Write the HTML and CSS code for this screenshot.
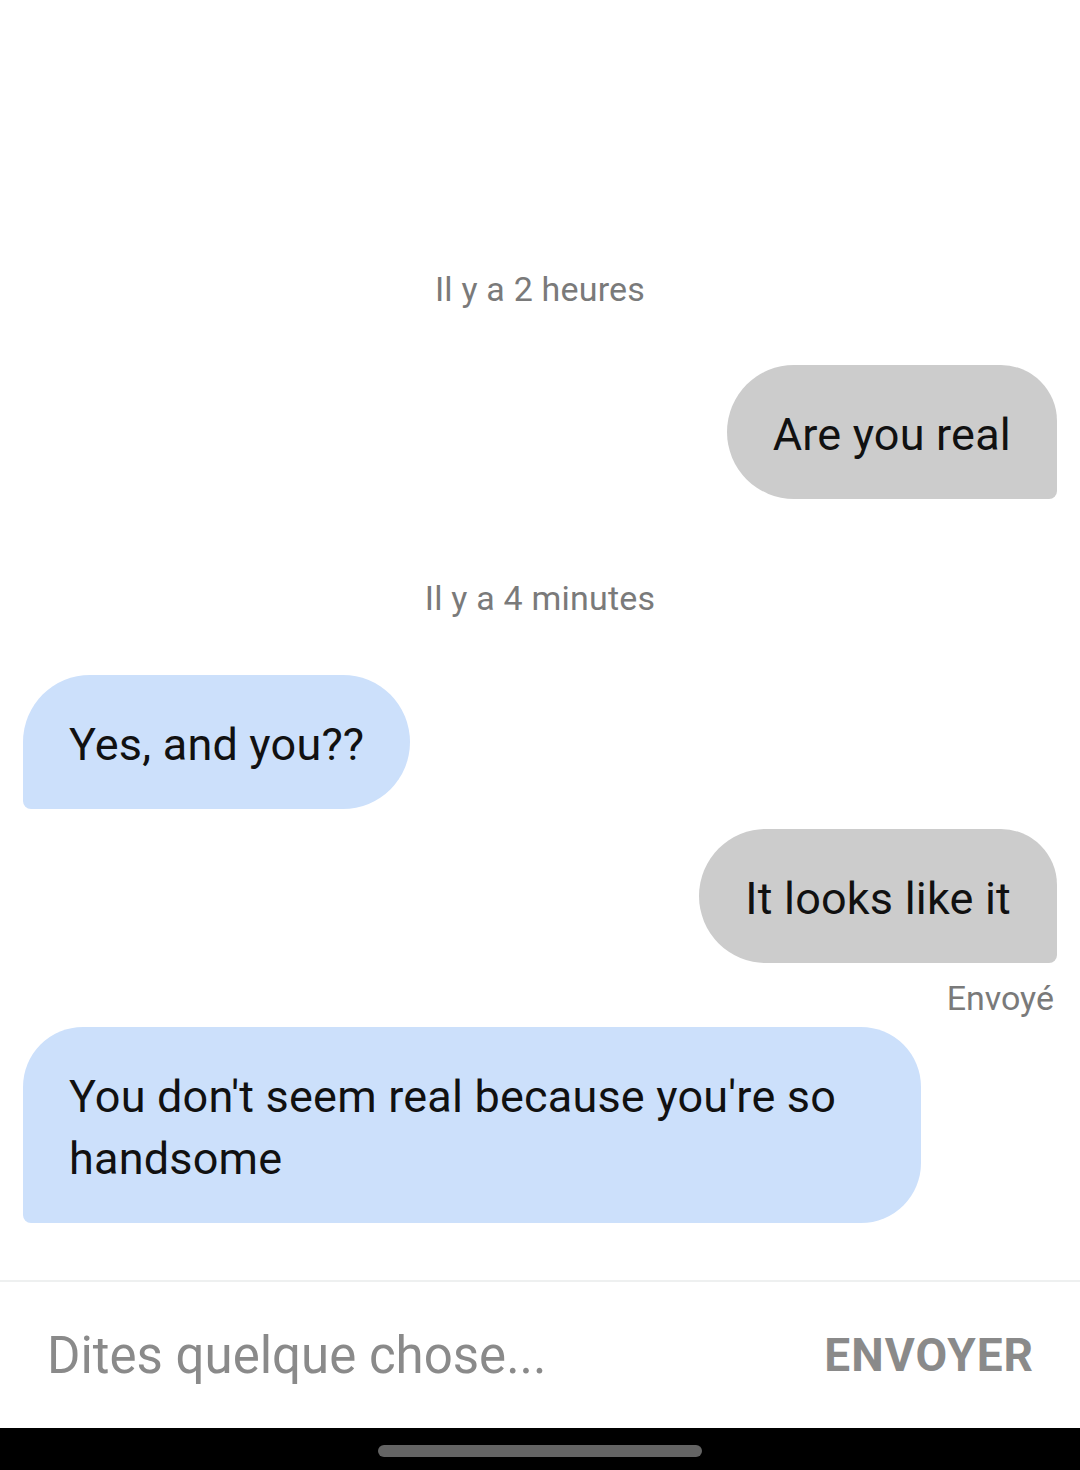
FILE: index.html
```html
<!DOCTYPE html>
<html lang="fr">
<head>
  <meta charset="UTF-8">
  <meta name="viewport" content="width=device-width, initial-scale=1.0">
  <title>Messages</title>
  <link rel="stylesheet" href="styles.css">
</head>
<body>
  <div class="screen">
    <div class="chat">
      <div class="stamp stamp-first">Il y a 2 heures</div>
      <div class="row row-out first-out">
        <div class="bubble out">Are you real</div>
      </div>
      <div class="stamp stamp-second">Il y a 4 minutes</div>
      <div class="row row-in">
        <div class="bubble in">Yes, and you??</div>
      </div>
      <div class="row row-out gap-small">
        <div class="bubble out">It looks like it</div>
      </div>
      <div class="status">Envoyé</div>
      <div class="row row-in gap-tiny">
        <div class="bubble in wide">You don't seem real because you're so handsome</div>
      </div>
    </div>
    <div class="composer">
      <input type="text" class="composer-input" placeholder="Dites quelque chose...">
      <button class="send">ENVOYER</button>
    </div>
    <div class="navbar"><span class="home-pill"></span></div>
  </div>
</body>
</html>
```

FILE: styles.css
```css
html, body { margin: 0; padding: 0; background: #fff; }
body { font-family: Roboto, "Liberation Sans", Arial, sans-serif; }
.screen { display: flex; flex-direction: column; width: 1080px; height: 1470px; overflow: hidden; }
.chat { flex: 1; display: flex; flex-direction: column; padding: 0 23px; border-bottom: 2px solid #eef0f0; }
.stamp { text-align: center; color: #7a7a7a; font-size: 34px; line-height: 40px; letter-spacing: 0.2px; }
.stamp-first { margin-top: 269px; }
.stamp-second { margin-top: 79px; }
.row { display: flex; }
.row-out { justify-content: flex-end; }
.row-in { justify-content: flex-start; margin-top: 57px; }
.first-out { margin-top: 56px; }
.gap-small { margin-top: 20px; }
.gap-tiny { margin-top: 9px; }
.bubble { box-sizing: border-box; padding: 39px 46px 33px; font-size: 45px; line-height: 62px; color: #111; letter-spacing: 0.2px; }
.out { background: #cccccc; border-radius: 67px 56px 8px 67px; }
.in { background: #cce0fb; border-radius: 67px 67px 67px 8px; }
.wide { width: 898px; border-radius: 60px 60px 60px 8px; }
.status { text-align: right; color: #7a7a7a; font-size: 34px; line-height: 40px; margin-top: 15px; padding-right: 3px; }
.composer { height: 146px; display: flex; align-items: center; justify-content: space-between; padding: 0 46px 0 47px; }
.composer-input { flex: 1; border: none; outline: none; padding: 0; font-family: Roboto, "Liberation Sans", Arial, sans-serif; font-size: 51px; color: #333; background: transparent; }
.composer-input::placeholder { color: #8a8a8a; }
.send { border: none; background: none; padding: 0; font-family: Roboto, "Liberation Sans", Arial, sans-serif; font-size: 46px; font-weight: bold; color: #8a8a8a; letter-spacing: 1px; cursor: pointer; }
.navbar { height: 42px; background: #000; display: flex; justify-content: center; align-items: center; }
.home-pill { width: 324px; height: 12px; border-radius: 6px; background: #646464; margin-top: 3px; }
```
